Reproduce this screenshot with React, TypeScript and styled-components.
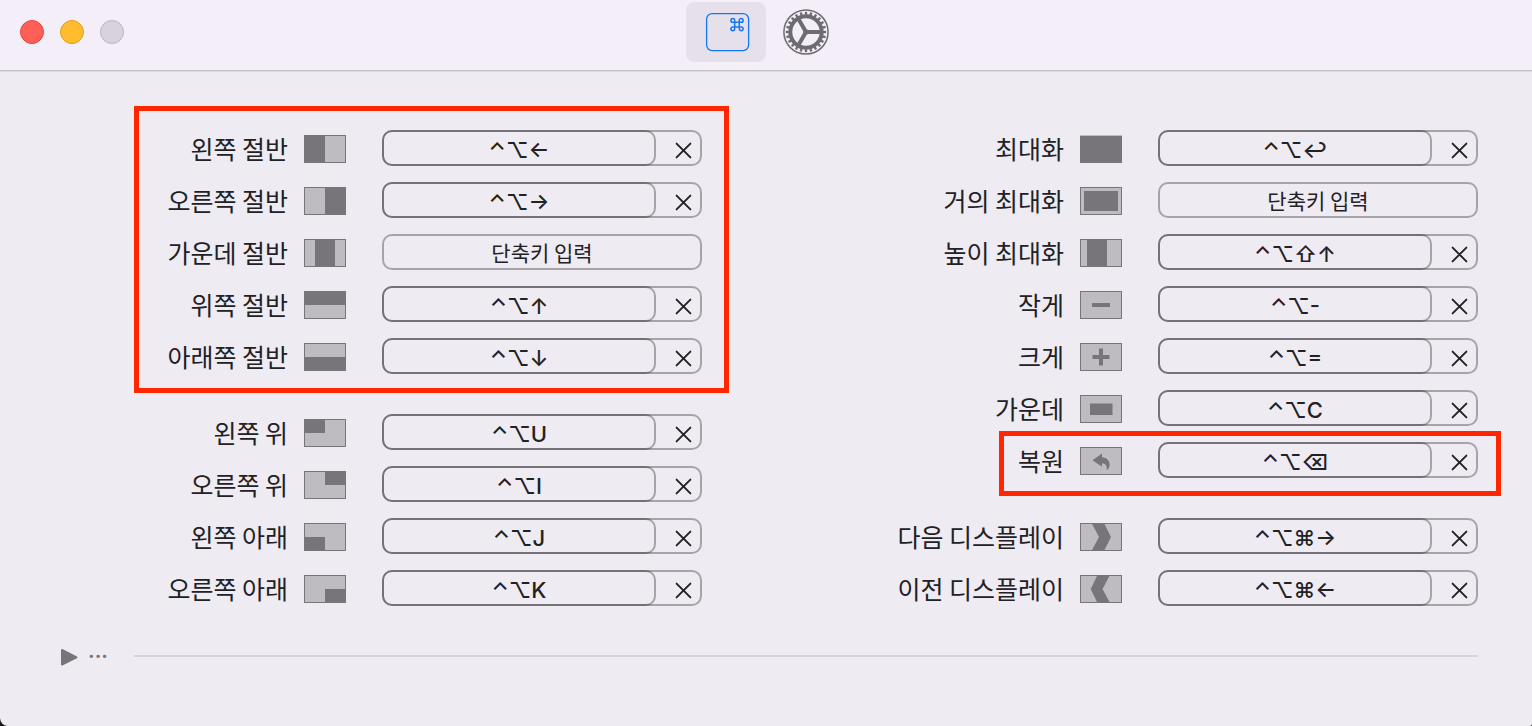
import React, { useState } from 'react';
import styled, { createGlobalStyle, css } from 'styled-components';

const INK = '#222124';
const DARK = '#78757a';
const LIGHT = '#bebcc1';
const LATIN = "Inter, 'Noto Sans CJK KR', sans-serif";
const KOREAN = "'Noto Sans CJK KR', 'Noto Sans', sans-serif";

const GlobalStyle = createGlobalStyle`
  *, *::before, *::after { box-sizing: border-box; }
  html { background: #1a1a1a; }
  body { margin: 0; color: ${INK}; font-family: ${KOREAN}; }
  button { margin: 0; padding: 0; border: 0; background: none; color: inherit; font: inherit; cursor: default; }
  svg { display: block; }
`;

const Window = styled.div`
  display: flex;
  flex-direction: column;
  min-height: 100vh;
  background: #eeebf2;
  border-radius: 0 0 2px 8px;
  overflow: hidden;
`;

const TitleBar = styled.header`
  display: grid;
  grid-template-columns: 1fr auto 1fr;
  align-items: start;
  height: 72px;
  padding: 2px 20px 0;
  background: #f4eef9;
  border-bottom: 1px solid #dcd9e0;
  box-shadow: inset 0 -1px 0 #c6c2ca;
`;

const WindowControls = styled.div`
  display: flex;
  align-items: center;
  gap: 16px;
  height: 60px;
`;

const WindowControl = styled.button<{ $fill: string; $edge: string }>`
  width: 24px;
  height: 24px;
  border: 1px solid ${(p) => p.$edge};
  border-radius: 50%;
  background: ${(p) => p.$fill};
`;

const Toolbar = styled.nav`
  display: flex;
`;

const ToolbarTab = styled.button<{ $active: boolean }>`
  display: flex;
  align-items: center;
  justify-content: center;
  width: 80px;
  height: 60px;
  border-radius: 8px;
  background: ${(p) => (p.$active ? '#e6e0ea' : 'transparent')};
`;

const Columns = styled.main`
  display: grid;
  grid-template-columns: 568fr 716fr;
  column-gap: 60px;
  padding: 58px 54px 0 134px;
`;

const Column = styled.div`
  display: flex;
  flex-direction: column;
  gap: 40px;
`;

const frame = css`
  &::after {
    content: '';
    position: absolute;
    border: 5px solid #ff2600;
    pointer-events: none;
  }
`;

const Group = styled.section<{ $framed?: boolean }>`
  position: relative;
  display: flex;
  flex-direction: column;
  gap: 16px;
  ${(p) => p.$framed && frame}
  &::after {
    inset: -24px -27px -19px 0;
  }
`;

const Row = styled.div<{ $framed?: boolean }>`
  position: relative;
  display: grid;
  grid-template-columns: 1fr 78px 320px;
  align-items: start;
  height: 36px;
  ${(p) => p.$framed && frame}
  &::after {
    top: -11px;
    right: -23px;
    bottom: -18px;
    width: 502px;
  }
`;

const RowLabel = styled.label`
  padding-right: 16px;
  font-size: 25px;
  line-height: 36px;
  text-align: right;
  white-space: nowrap;
`;

const RowIcon = styled.svg`
  width: 42px;
  height: 28px;
  margin-top: 5px;
`;

const Field = styled.div`
  display: flex;
  height: 36px;
  border: 2px solid rgba(0, 0, 0, 0.3);
  border-radius: 10px;
`;

const Recorder = styled.button<{ $filled: boolean }>`
  ${(p) =>
    p.$filled
      ? css`
          width: 274px;
          height: 36px;
          margin: -2px 0 0 -2px;
          padding-top: 4px;
          border: 2px solid rgba(0, 0, 0, 0.3);
          border-radius: 10px;
          font-family: ${LATIN};
          font-size: 22px;
          font-weight: 500;
          line-height: 28px;
        `
      : css`
          flex: 1;
          font-size: 21px;
          line-height: 32px;
        `}
`;

const ClearButton = styled.button`
  display: flex;
  flex: 1;
  align-items: center;
  justify-content: center;
  padding: 4px 0 0 10px;
`;

const Footer = styled.footer`
  display: flex;
  align-items: center;
  height: 24px;
  margin: 38px 54px 0 60px;
`;

const Disclosure = styled.button`
  display: flex;
  align-items: center;
  gap: 10px;
  width: 74px;
  color: ${DARK};
  font-family: ${LATIN};
  font-size: 20px;
  font-weight: 700;
  line-height: 24px;
`;

const Divider = styled.hr`
  flex: 1;
  height: 2px;
  margin: 0;
  border: 0;
  background: #d6d3d9;
`;

type Entry = { id: string; label: string; keys: string; art: React.ReactNode; framed?: boolean };

const box = (x: number, y: number, w: number, h: number) => (
  <rect x={x} y={y} width={w} height={h} fill={DARK} />
);

const halves: Entry[] = [
  { id: 'left-half', label: '왼쪽 절반', keys: '⌃⌥←', art: box(0, 0, 21, 28) },
  { id: 'right-half', label: '오른쪽 절반', keys: '⌃⌥→', art: box(21, 0, 21, 28) },
  { id: 'center-half', label: '가운데 절반', keys: '', art: box(11, 0, 20, 28) },
  { id: 'top-half', label: '위쪽 절반', keys: '⌃⌥↑', art: box(0, 0, 42, 14) },
  { id: 'bottom-half', label: '아래쪽 절반', keys: '⌃⌥↓', art: box(0, 14, 42, 14) },
];

const corners: Entry[] = [
  { id: 'top-left', label: '왼쪽 위', keys: '⌃⌥U', art: box(0, 0, 21, 14) },
  { id: 'top-right', label: '오른쪽 위', keys: '⌃⌥I', art: box(21, 0, 21, 14) },
  { id: 'bottom-left', label: '왼쪽 아래', keys: '⌃⌥J', art: box(0, 14, 21, 14) },
  { id: 'bottom-right', label: '오른쪽 아래', keys: '⌃⌥K', art: box(21, 14, 21, 14) },
];

const sizes: Entry[] = [
  {
    id: 'maximize',
    label: '최대화',
    keys: '⌃⌥↩',
    art: (
      <>
        {box(0, 0, 42, 28)}
        <rect width="42" height="1" fill={LIGHT} />
      </>
    ),
  },
  { id: 'almost-maximize', label: '거의 최대화', keys: '', art: box(4, 4, 34, 20) },
  { id: 'maximize-height', label: '높이 최대화', keys: '⌃⌥⇧↑', art: box(7, 0, 20, 28) },
  { id: 'smaller', label: '작게', keys: '⌃⌥-', art: box(12, 12, 18, 4) },
  {
    id: 'larger',
    label: '크게',
    keys: '⌃⌥=',
    art: (
      <>
        {box(12.5, 12, 17, 4)}
        {box(19, 5.5, 4, 17)}
      </>
    ),
  },
  { id: 'center', label: '가운데', keys: '⌃⌥C', art: box(10, 8.5, 22.5, 11.5) },
  {
    id: 'restore',
    label: '복원',
    keys: '⌃⌥⌫',
    framed: true,
    art: (
      <path
        d="M12.5 13.2 L22 6.5 V10.3 C27 10.8 29.8 14 29.6 18 C29.5 20.5 28.3 22.3 26.6 23.2 C27.2 19.2 26.2 16.6 22 16.2 V19.8 Z"
        fill={DARK}
      />
    ),
  },
];

const displays: Entry[] = [
  {
    id: 'next-display',
    label: '다음 디스플레이',
    keys: '⌃⌥⌘→',
    art: <path d="M11.5 0 H24 L31 14 L24 28 H11.5 L19 14 Z" fill={DARK} />,
  },
  {
    id: 'previous-display',
    label: '이전 디스플레이',
    keys: '⌃⌥⌘←',
    art: <path d="M30 0 H17.5 L10.7 14 L17.5 28 H30 L22.5 14 Z" fill={DARK} />,
  },
];

function ShortcutRow({ entry }: { entry: Entry }) {
  const [keys, setKeys] = useState(entry.keys);
  return (
    <Row $framed={entry.framed}>
      <RowLabel htmlFor={entry.id}>{entry.label}</RowLabel>
      <RowIcon viewBox="0 0 42 28" aria-hidden="true">
        <rect x="0.5" y="0.5" width="41" height="27" fill={LIGHT} stroke={DARK} />
        {entry.art}
      </RowIcon>
      <Field>
        <Recorder id={entry.id} type="button" $filled={keys !== ''}>
          {keys || '단축키 입력'}
        </Recorder>
        {keys && (
          <ClearButton type="button" aria-label={`${entry.label} 지우기`} onClick={() => setKeys('')}>
            <svg width="17" height="17" viewBox="0 0 17 17" fill="none" stroke={INK} strokeWidth="1.9" strokeLinecap="round">
              <path d="M1.6 1.6 L15.4 15.4 M15.4 1.6 L1.6 15.4" />
            </svg>
          </ClearButton>
        )}
      </Field>
    </Row>
  );
}

function ShortcutGroup({ entries, framed }: { entries: Entry[]; framed?: boolean }) {
  return (
    <Group $framed={framed}>
      {entries.map((entry) => (
        <ShortcutRow key={entry.id} entry={entry} />
      ))}
    </Group>
  );
}

function KeyboardIcon() {
  return (
    <svg width="48" height="40" viewBox="0 0 48 40" fill="none" stroke="#1677f2" aria-hidden="true">
      <rect x="4.6" y="1.6" width="42" height="37" rx="5.5" strokeWidth="1.3" />
      <path
        strokeWidth="1.5"
        d="M32.7 10.3 H37.3 V14.9 H32.7 Z M32.7 10.3 H30.8 A1.9 1.9 0 1 1 32.7 8.4 V10.3 M37.3 10.3 V8.4 A1.9 1.9 0 1 1 39.2 10.3 H37.3 M37.3 14.9 H39.2 A1.9 1.9 0 1 1 37.3 16.8 V14.9 M32.7 14.9 V16.8 A1.9 1.9 0 1 1 30.8 14.9 H32.7"
      />
    </svg>
  );
}

const TEETH = Array.from({ length: 24 }, (_, i) => i * 15);

function GearIcon() {
  return (
    <svg width="46" height="46" viewBox="0 0 46 46" fill="none" stroke="#6e6b72" aria-hidden="true">
      <circle cx="23" cy="23" r="22.1" strokeWidth="1.5" />
      {TEETH.map((angle) => (
        <path key={angle} d="M23 7 V2.8" strokeWidth="2.3" transform={`rotate(${angle} 23 23)`} />
      ))}
      <circle cx="23" cy="23" r="15.7" strokeWidth="4" />
      <path strokeWidth="4" d="M23 23 H38 M23 23 L15.5 10 M23 23 L15.5 36" />
      <circle cx="23" cy="23" r="1.8" strokeWidth="2" />
    </svg>
  );
}

export default function App() {
  const [tab, setTab] = useState('shortcuts');
  return (
    <>
      <GlobalStyle />
      <Window>
        <TitleBar>
          <WindowControls>
            <WindowControl type="button" aria-label="닫기" $fill="#ff5f57" $edge="#e2463f" />
            <WindowControl type="button" aria-label="최소화" $fill="#febc2e" $edge="#e1a116" />
            <WindowControl type="button" aria-label="확대" $fill="#d7d2dc" $edge="#b9b5be" />
          </WindowControls>
          <Toolbar>
            <ToolbarTab
              type="button"
              aria-label="키보드 단축키"
              $active={tab === 'shortcuts'}
              onClick={() => setTab('shortcuts')}
            >
              <KeyboardIcon />
            </ToolbarTab>
            <ToolbarTab type="button" aria-label="설정" $active={tab === 'settings'} onClick={() => setTab('settings')}>
              <GearIcon />
            </ToolbarTab>
          </Toolbar>
        </TitleBar>
        <Columns>
          <Column>
            <ShortcutGroup entries={halves} framed />
            <ShortcutGroup entries={corners} />
          </Column>
          <Column>
            <ShortcutGroup entries={sizes} />
            <ShortcutGroup entries={displays} />
          </Column>
        </Columns>
        <Footer>
          <Disclosure type="button" aria-expanded="false">
            <svg width="18" height="20" viewBox="0 0 18 20" fill={DARK} stroke={DARK} strokeWidth="2" strokeLinejoin="round">
              <path d="M2 4 V18.5 L16.5 11.3 Z" />
            </svg>
            ···
          </Disclosure>
          <Divider />
        </Footer>
      </Window>
    </>
  );
}
